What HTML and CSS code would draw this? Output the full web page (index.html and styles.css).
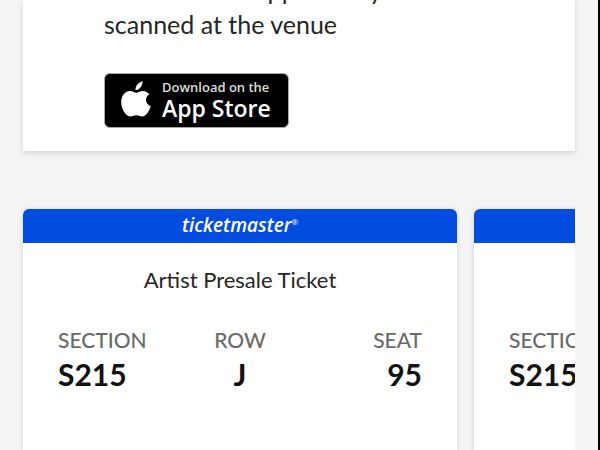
FILE: index.html
```html
<!DOCTYPE html>
<html lang="en">
  <head>
    <meta charset="UTF-8" />
    <meta name="viewport" content="width=device-width, initial-scale=1.0" />
    <title>Your Tickets</title>
    <link rel="stylesheet" href="styles.css" />
  </head>
  <body>
    <main class="page">
      <section class="app-card">
        <p class="app-text">
          Ticketmaster App so they can be<br />
          scanned at the venue
        </p>
        <a class="store-badge" href="#">
          <svg class="apple" viewBox="0 0 30 36" aria-hidden="true">
            <path d="M21.500 0.500c.3 3.700-2.900 8.700-7 8.600-.4-4 3-8.100 7-8.600z" />
            <path d="M28.300 13.300c-5 3.200-4.300 9.700 1.500 12-1.500 4.800-4.900 10.200-8.500 10.200-2.200 0-3.200-1.300-6-1.300s-4 1.300-6 1.300C4.900 35.500.2 28 .2 21.300c0-7 4.200-11.200 8.800-11.200 2.500 0 4.500 1.700 6.200 1.700 1.600 0 3.900-1.900 6.900-1.800 2.400.1 4.700 1.200 6.200 3.300z" />
          </svg>
          <span class="store-label">
            <span class="store-small">Download on the</span>
            <span class="store-name">App Store</span>
          </span>
        </a>
      </section>

      <section class="tickets">
        <article class="ticket">
          <header class="ticket-brand">ticketmaster<sup>®</sup></header>
          <h2 class="ticket-title">Artist Presale Ticket</h2>
          <dl class="seat-info">
            <div class="seat-item">
              <dt>SECTION</dt>
              <dd>S215</dd>
            </div>
            <div class="seat-item">
              <dt>ROW</dt>
              <dd>J</dd>
            </div>
            <div class="seat-item">
              <dt>SEAT</dt>
              <dd>95</dd>
            </div>
          </dl>
        </article>

        <article class="ticket">
          <header class="ticket-brand">ticketmaster<sup>®</sup></header>
          <h2 class="ticket-title">Artist Presale Ticket</h2>
          <dl class="seat-info">
            <div class="seat-item">
              <dt>SECTION</dt>
              <dd>S215</dd>
            </div>
            <div class="seat-item">
              <dt>ROW</dt>
              <dd>J</dd>
            </div>
            <div class="seat-item">
              <dt>SEAT</dt>
              <dd>96</dd>
            </div>
          </dl>
        </article>
      </section>
    </main>
  </body>
</html>
```

FILE: styles.css
```css
* {
  box-sizing: border-box;
}
body {
  margin: 0;
  height: 100vh;
  overflow: hidden;
  background-color: #f4f4f4;
  border-right: 2px solid #000;
  font-family: Lato, "Liberation Sans", sans-serif;
  color: #262626;
}
.page {
  display: flex;
  flex-direction: column;
  height: 100%;
  padding: 0 23px;
}
.app-card {
  padding: 0 81px 23px;
  background-color: #fff;
  box-shadow: 0 2px 6px rgba(0, 0, 0, 0.14);
}
/* the first line is scrolled under the top edge */
.app-text {
  margin: -27px 0 32px;
  font-size: 25px;
  line-height: 34px;
  white-space: nowrap;
}
.store-badge {
  display: inline-flex;
  align-items: center;
  gap: 11px;
  height: 55px;
  padding: 0 17px 0 16px;
  border: 1px solid #a6a6a6;
  border-radius: 6px;
  background-color: #000;
  color: #fff;
  text-decoration: none;
  font-family: "Open Sans", "Noto Sans", sans-serif;
  vertical-align: top;
}
.apple {
  width: 30px;
  height: 36px;
  margin-bottom: 4px;
  fill: #fff;
}
.store-label {
  display: flex;
  flex-direction: column;
}
.store-small {
  font-size: 13px;
  line-height: 18px;
  font-weight: 600;
  color: #ddd;
}
.store-name {
  font-size: 23px;
  line-height: 24px;
  font-weight: 600;
  margin-bottom: 4px;
}
.tickets {
  display: flex;
  flex: 1;
  gap: 17px;
  margin-top: 50px;
  padding-top: 8px;
  padding-left: 8px;
  margin-left: -8px;
  overflow: hidden;
}
.ticket {
  flex: 0 0 434px;
  border-radius: 6px 6px 0 0;
  background-color: #fff;
  box-shadow: 0 1px 5px rgba(0, 0, 0, 0.16);
}
.ticket-brand {
  height: 34px;
  border-radius: 6px 6px 0 0;
  background-color: #024ddf;
  color: #fff;
  font-family: "Open Sans", "Noto Sans", sans-serif;
  font-size: 19px;
  line-height: 33px;
  font-weight: 600;
  font-style: italic;
  text-align: center;
}
.ticket-brand sup {
  font-size: 8px;
  line-height: 8px;
  font-weight: 400;
  font-style: normal;
}
.ticket-title {
  margin: 23px 0 0;
  font-size: 22px;
  line-height: 28px;
  font-weight: 400;
  text-align: center;
}
.seat-info {
  display: grid;
  grid-template-columns: 1fr 1fr 1fr;
  margin: 32px 0 0;
  padding: 0 35px;
}
.seat-item {
  text-align: center;
}
.seat-item:first-child {
  text-align: left;
}
.seat-item:last-child {
  text-align: right;
}
.seat-item dt {
  font-size: 21px;
  line-height: 28px;
  font-weight: 500;
  color: #6a6a6a;
}
.seat-item dd {
  margin: 0;
  font-size: 30px;
  line-height: 40px;
  font-weight: 700;
  color: #121212;
}
```
